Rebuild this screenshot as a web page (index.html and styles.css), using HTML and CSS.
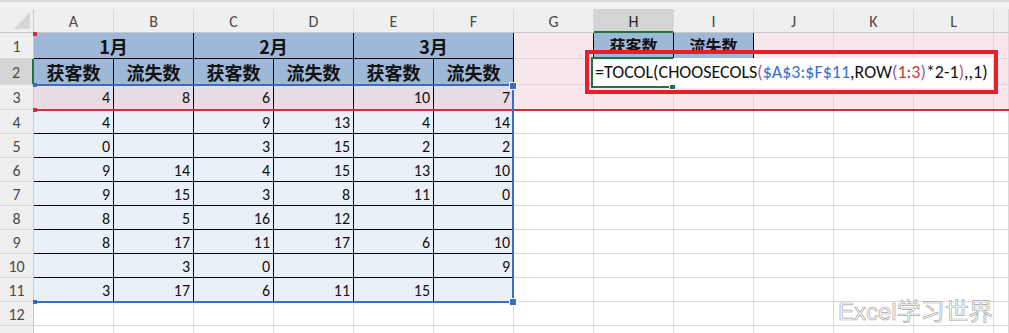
FILE: index.html
```html
<!DOCTYPE html>
<html lang="zh-CN">
<head>
  <meta charset="UTF-8">
  <title>TOCOL CHOOSECOLS</title>
  <link rel="stylesheet" href="styles.css">
</head>
<body>
  <div class="app">
    <div class="topbar"></div>
    <div class="sheet" id="sheet"></div>

    <!-- reference highlights drawn by excel -->
    <div class="ref-red-line"></div>
    <div class="mark red top1"></div>
    <div class="mark red top3"></div>
    <div class="ref-blue"></div>
    <div class="mark blue"></div>
    <div class="mark blue bot"></div>
    <div class="handle tr"></div>
    <div class="handle br"></div>

    <!-- in-cell editor on H2 -->
    <div class="editbox">
      <span>=TOCOL(CHOOSECOLS</span><span class="p1">(</span><span class="rb">$A$3:$F$11</span><span>,ROW</span><span class="p2">(</span><span class="rr">1:3</span><span class="p2">)</span><span>*2-1</span><span class="p1">)</span><span>,,1)</span>
    </div>
    <div class="active"></div>
    <div class="fill"></div>

    <div class="note"></div>
    <div class="watermark">Excel学习世界</div>
  </div>

  <script>
    var cols = ['A','B','C','D','E','F','G','H','I','J','K','L',''];
    var data = [
      [4, 8, 6, '', 10, 7],
      [4, '', 9, 13, 4, 14],
      [0, '', 3, 15, 2, 2],
      [9, 14, 4, 15, 13, 10],
      [9, 15, 3, 8, 11, 0],
      [8, 5, 16, 12, '', ''],
      [8, 17, 11, 17, 6, 10],
      ['', 3, 0, '', '', 9],
      [3, 17, 6, 11, 15, '']
    ];
    var html = '<div class="corner"><i></i></div>';
    for (var i = 0; i < cols.length; i++) {
      html += '<div class="ch' + (cols[i] == 'H' ? ' on' : '') + '">' + cols[i] + '</div>';
    }
    // row 1
    html += '<div class="rh">1</div>';
    html += '<div class="c t hd span2">1月</div>';
    html += '<div class="c t hd span2">2月</div>';
    html += '<div class="c t hd span2">3月</div>';
    html += '<div class="c pk lb"></div>';
    html += '<div class="c t hd sm">获客数</div>';
    html += '<div class="c t hd sm">流失数</div>';
    for (var i = 0; i < 4; i++) html += '<div class="c pk"></div>';
    // row 2
    html += '<div class="rh on">2</div>';
    for (var i = 0; i < 6; i++) {
      html += '<div class="c t hd">' + (i % 2 == 0 ? '获客数' : '流失数') + '</div>';
    }
    for (var i = 0; i < 7; i++) html += '<div class="c pk"></div>';
    // rows 3 - 11
    for (var r = 0; r < data.length; r++) {
      html += '<div class="rh">' + (r + 3) + '</div>';
      for (var j = 0; j < 6; j++) {
        html += '<div class="c t num ' + (r == 0 ? 'mv' : 'bl') + '">' + data[r][j] + '</div>';
      }
      for (var j = 0; j < 7; j++) html += '<div class="c' + (r == 0 ? ' pk' : '') + '"></div>';
    }
    // row 12 and the top of row 13
    for (var r = 12; r <= 13; r++) {
      html += '<div class="rh">' + (r == 12 ? r : '') + '</div>';
      for (var j = 0; j < 13; j++) html += '<div class="c"></div>';
    }
    document.getElementById('sheet').innerHTML = html;
  </script>
</body>
</html>
```

FILE: styles.css
```css
* {
  margin: 0;
  padding: 0;
  box-sizing: border-box;
}
body {
  background: #fff;
  font-family: "Carlito", "Lato", "Noto Sans CJK SC", sans-serif;
  overflow: hidden;
}
.app {
  position: relative;
  width: 1009px;
  height: 333px;
  overflow: hidden;
}
.topbar {
  height: 9px;
  background: linear-gradient(#dcdcdc 0 2px, #f2f2f2 2px);
}
.sheet {
  display: grid;
  grid-template-columns: 34px repeat(12, 80px) 15px;
  grid-template-rows: 24px 26px 26px 25px repeat(10, 24px);
}
.corner {
  background: #efefef;
  border-right: 1px solid #c8c8c8;
  border-bottom: 1px solid #c8c8c8;
  display: flex;
  justify-content: flex-end;
  align-items: flex-end;
  padding: 0 3px 3px 0;
}
.corner i {
  width: 16px;
  height: 17px;
  background: #d6d6d6;
  clip-path: polygon(100% 0, 100% 100%, 0 100%);
}
.ch {
  background: #efefef;
  border-right: 1px solid #dadada;
  border-bottom: 1px solid #c8c8c8;
  color: #4a4a4a;
  font-size: 16px;
  display: flex;
  align-items: center;
  justify-content: center;
  padding-top: 2px;
}
.ch.on {
  background: #d4d4d4;
  border-bottom: 2px solid #217346;
  color: #2b2b2b;
}
.rh {
  background: #efefef;
  border-right: 1px solid #c8c8c8;
  border-bottom: 1px solid #dadada;
  color: #4a4a4a;
  font-size: 16px;
  display: flex;
  align-items: center;
  justify-content: center;
  padding-top: 1px;
}
.rh.on {
  background: #d4d4d4;
  border-right: 2px solid #217346;
}
.c {
  border-right: 1px solid #dadada;
  border-bottom: 1px solid #dadada;
  display: flex;
  align-items: center;
  font-size: 16px;
  color: #111;
}
.c.t {
  border-color: #000;
}
.c.pk {
  background: #f9e8eb;
  border-color: #e6d3d7;
}
.c.lb {
  border-right-color: #000;
}
.hd {
  background: #a0b8d8;
  justify-content: center;
  font-family: "Noto Sans CJK SC", sans-serif;
  font-weight: bold;
  font-size: 18px;
}
.hd.sm {
  font-size: 16px;
  align-items: flex-start;
  padding-top: 0;
}
.span2 {
  grid-column: span 2;
}
.num {
  justify-content: flex-end;
  padding: 1px 3px 0 0;
}
.mv {
  background: #e7dce6;
}
.bl {
  background: #eaf0f8;
}

/* excel reference highlights */
.ref-red-line {
  position: absolute;
  left: 34px;
  top: 109px;
  width: 975px;
  height: 2px;
  background: #c8313c;
}
.mark {
  position: absolute;
  left: 33px;
  width: 4px;
  height: 4px;
}
.mark.red { background: #c8313c; }
.mark.top1 { top: 32px; }
.mark.top3 { top: 108px; }
.mark.blue { background: #3a6cc4; top: 83px; }
.mark.blue.bot { top: 300px; }
.ref-blue {
  position: absolute;
  left: 34px;
  top: 84px;
  width: 480px;
  height: 219px;
  border: 2px solid #3a6cc4;
  border-left: none;
}
.handle {
  position: absolute;
  width: 8px;
  height: 8px;
  background: #3a6cc4;
  border: 1px solid #fff;
}
.handle.tr { left: 509px; top: 82px; }
.handle.br { left: 509px; top: 298px; }

/* in-cell editor */
.editbox {
  position: absolute;
  left: 592px;
  top: 58px;
  width: 401px;
  height: 30px;
  background: #fff;
  font-size: 18px;
  color: #111;
  padding: 3px 0 0 3px;
  white-space: nowrap;
}
.editbox .p1 { color: #c9508a; }
.editbox .p2 { color: #8a5fb8; }
.editbox .rb { color: #3c6fd0; }
.editbox .rr { color: #c23a3a; }
.active {
  position: absolute;
  left: 591px;
  top: 57px;
  width: 82px;
  height: 31px;
  border: 2px solid #217346;
  border-right: none;
}
.fill {
  position: absolute;
  left: 669px;
  top: 84px;
  width: 7px;
  height: 6px;
  background: #217346;
  border: 1px solid #fff;
}
.note {
  position: absolute;
  left: 585px;
  top: 50px;
  width: 413px;
  height: 44px;
  border: 4px solid #e5202b;
}
.watermark {
  position: absolute;
  left: 838px;
  top: 292px;
  font-family: "Liberation Sans", "Noto Sans CJK SC", sans-serif;
  font-size: 24px;
  color: #fff;
  -webkit-text-stroke: 0.7px #a8a8a8;
}
```
